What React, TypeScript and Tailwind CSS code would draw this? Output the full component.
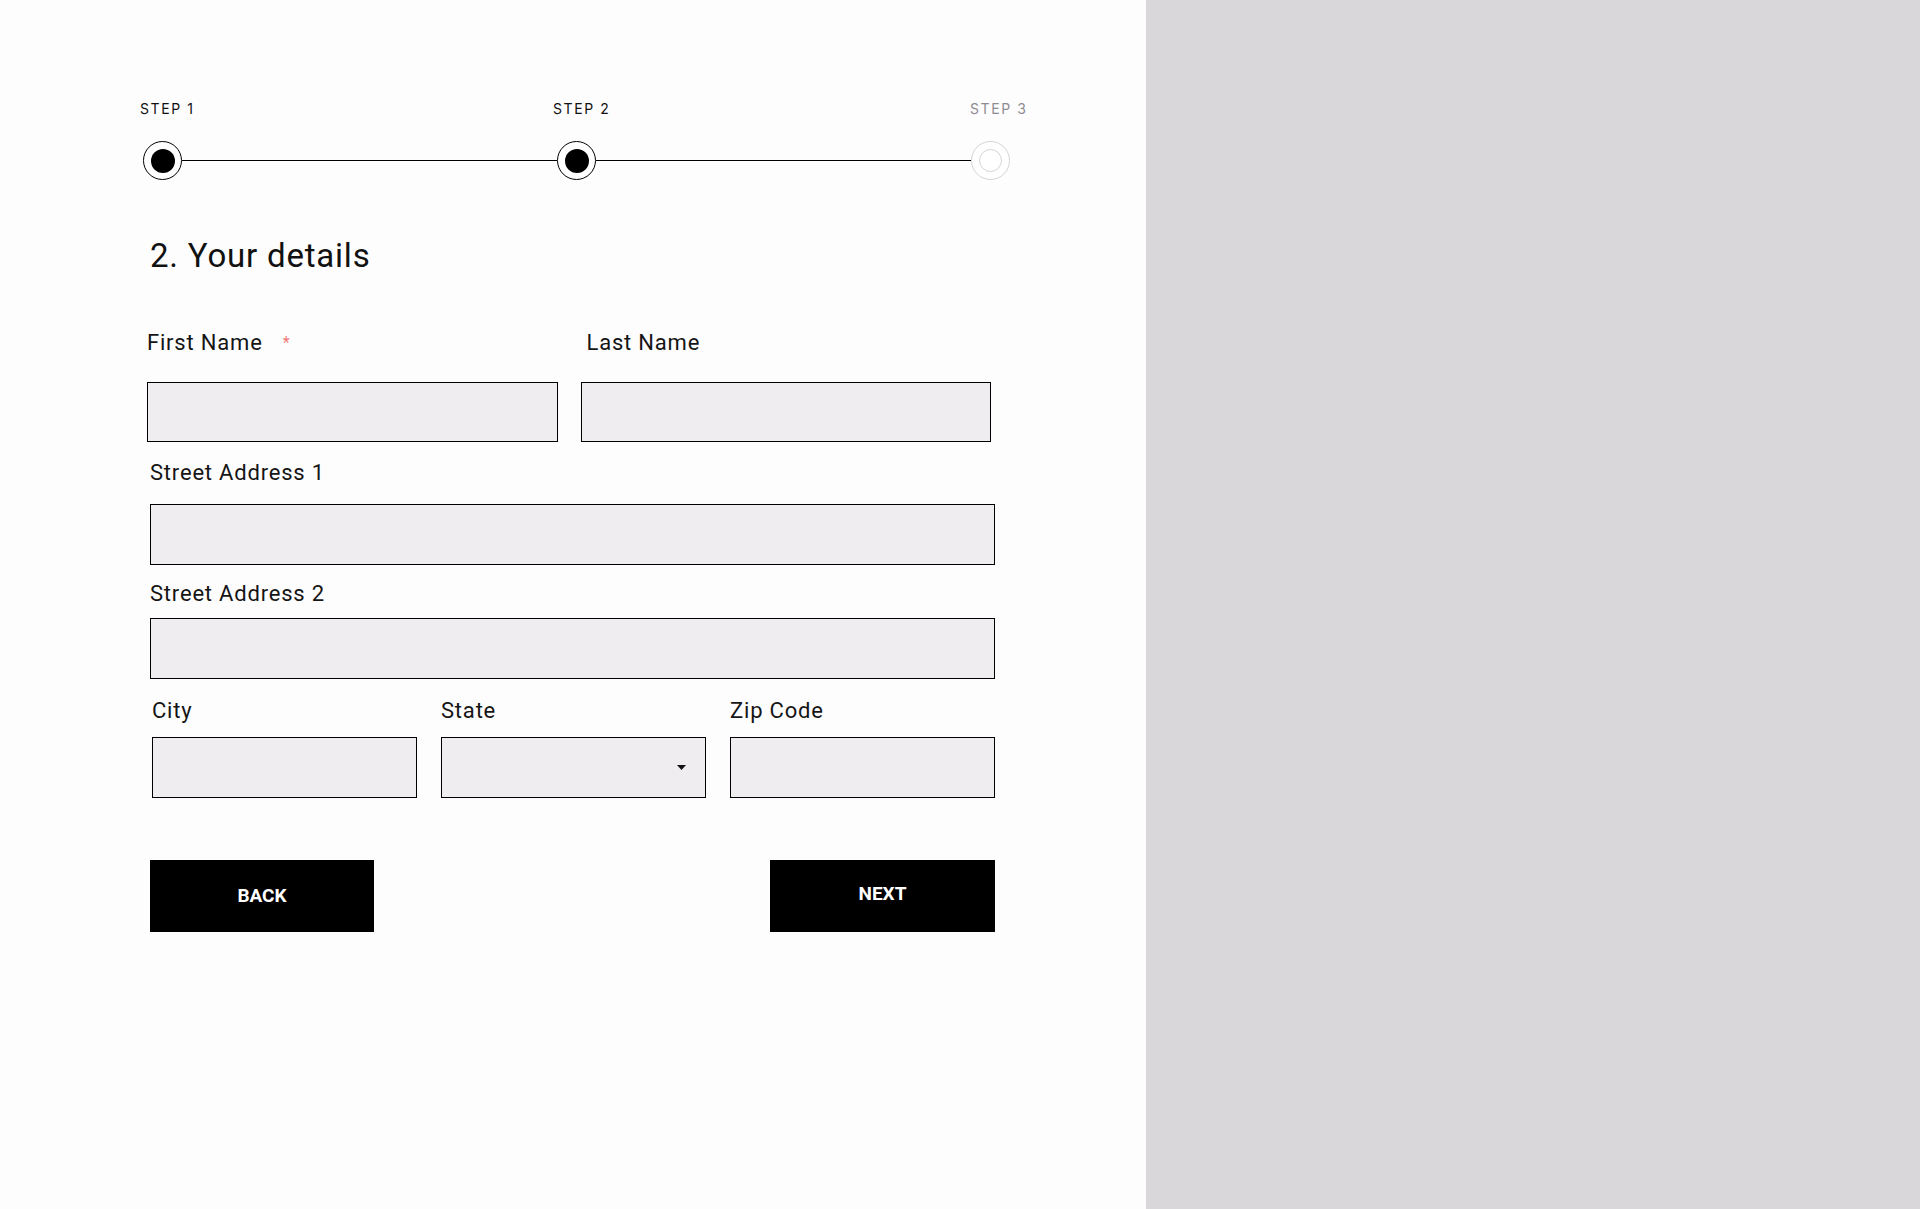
import React from "react";

function StepDot({ state }: { state: "done" | "todo" }) {
  if (state === "done") {
    return (
      <div className="w-[39px] h-[39px] shrink-0 rounded-full border border-black bg-white flex items-center justify-center">
        <div className="w-[24px] h-[24px] rounded-full bg-black" />
      </div>
    );
  }
  return (
    <div className="w-[39px] h-[39px] shrink-0 rounded-full border border-[#d4d3d6] bg-white flex items-center justify-center">
      <div className="w-[23px] h-[23px] rounded-full border border-[#d4d3d6]" />
    </div>
  );
}

function StepLabel({ label, muted, className = "" }: { label: string; muted?: boolean; className?: string }) {
  return (
    <span
      className={`block text-[14px] leading-[20px] tracking-[1.6px] whitespace-nowrap ${
        muted ? "text-[#8d8c90]" : "text-[#111]"
      } ${className}`}
      style={{ fontFamily: "Inter, 'Liberation Sans', sans-serif" }}
    >
      {label}
    </span>
  );
}

function Label({ children, className = "" }: { children: React.ReactNode; className?: string }) {
  return (
    <label className={`block text-[22px] leading-[28px] tracking-[0.8px] text-[#151515] ${className}`}>
      {children}
    </label>
  );
}

function TextBox({ className = "" }: { className?: string }) {
  return (
    <input
      type="text"
      className={`block w-full border border-black bg-[#efedf0] outline-none px-3 text-[20px] ${className}`}
    />
  );
}

export default function App() {
  return (
    <div
      className="flex h-screen w-full bg-[#d9d7da]"
      style={{ fontFamily: "Roboto, 'Liberation Sans', sans-serif" }}
    >
      <div className="w-[1146px] h-full bg-[#fefdfe] pt-[99px]">
        {/* stepper labels */}
        <div className="ml-[140px] flex h-[20px]">
          <div className="w-[413px]">
            <StepLabel label="STEP 1" />
          </div>
          <div className="w-[417px]">
            <StepLabel label="STEP 2" />
          </div>
          <StepLabel label="STEP 3" muted />
        </div>
        {/* stepper track */}
        <div className="mt-[22px] ml-[143px] w-[867px] flex items-center">
          <StepDot state="done" />
          <div className="flex-1 h-px bg-black" />
          <StepDot state="done" />
          <div className="flex-1 h-px bg-black" />
          <StepDot state="todo" />
        </div>

        <div className="ml-[150px] w-[845px]">
          <h1 className="mt-[56px] text-[33px] leading-[40px] tracking-[0.8px] text-[#111]">
            2. Your details
          </h1>

          <div className="mt-[53px] w-[844px] grid grid-cols-2 gap-x-[23px] -ml-[3px]">
            <div>
              <Label>
                First Name <span className="ml-[14px] text-[16px] align-top text-[#f07a78]">*</span>
              </Label>
              <TextBox className="mt-[25px] h-[60px]" />
            </div>
            <div>
              <Label className="pl-[6px]">Last Name</Label>
              <TextBox className="mt-[25px] h-[60px]" />
            </div>
          </div>

          <Label className="mt-[17px]">Street Address 1</Label>
          <TextBox className="mt-[17px] h-[61px]" />

          <Label className="mt-[15px]">Street Address 2</Label>
          <TextBox className="mt-[10px] h-[61px]" />

          <div className="mt-[18px] grid grid-cols-3 gap-x-[24px] ml-[2px]">
            <div>
              <Label>City</Label>
              <TextBox className="mt-[12px] h-[61px]" />
            </div>
            <div>
              <Label>State</Label>
              <div className="relative mt-[12px]">
                <select className="block w-full h-[61px] border border-black bg-[#efedf0] appearance-none outline-none px-3 text-[20px]">
                  <option value=""></option>
                </select>
                <svg
                  className="absolute right-[20px] top-[28px] pointer-events-none"
                  width="9"
                  height="5"
                  viewBox="0 0 9 5"
                >
                  <path d="M0 0 L9 0 L4.5 5 Z" fill="#111" />
                </svg>
              </div>
            </div>
            <div>
              <Label>Zip Code</Label>
              <TextBox className="mt-[12px] h-[61px]" />
            </div>
          </div>

          <div className="mt-[62px] flex justify-between">
            <button className="w-[224px] h-[72px] bg-black text-white text-[19px] font-bold">
              BACK
            </button>
            <button className="w-[225px] h-[72px] bg-black text-white text-[19px] font-bold pb-[4px]">
              NEXT
            </button>
          </div>
        </div>
      </div>
      <div className="flex-1 h-full bg-[#d9d7da]" />
    </div>
  );
}
